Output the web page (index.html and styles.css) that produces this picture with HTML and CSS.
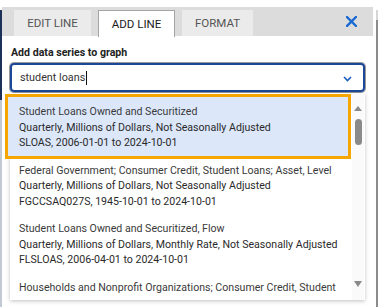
FILE: index.html
```html
<!DOCTYPE html>
<html lang="en">
<head>
  <meta charset="UTF-8" />
  <title>Edit Graph - Add Line</title>
  <link rel="stylesheet" href="styles.css">
</head>
<body>

<div class="page">
  <div class="edge-left"></div>

  <div class="panel">
    <div class="tabs">
      <div class="tab">Edit Line</div>
      <div class="tab active">Add Line</div>
      <div class="tab">Format</div>
      <button class="close" aria-label="Close">
        <svg width="11" height="11" viewBox="0 0 11 11"><path d="M1 1 L10 10 M10 1 L1 10" stroke="#1a6ad2" stroke-width="2.4" stroke-linecap="square" fill="none"/></svg>
      </button>
    </div>

    <div class="content">
      <div class="label">Add data series to graph</div>

      <div class="search">
        <span class="query">student loans</span><span class="caret"></span>
        <svg class="chevron" width="9" height="6" viewBox="0 0 9 6"><path d="M1 1 L4.5 4.5 L8 1" stroke="#1a5fc0" stroke-width="1.6" fill="none"/></svg>
      </div>

      <div class="dropdown">
        <div class="list">
          <div class="item selected">
            <div class="title">Student Loans Owned and Securitized</div>
            <div>Quarterly, Millions of Dollars, Not Seasonally Adjusted</div>
            <div>SLOAS, 2006-01-01 to 2024-10-01</div>
          </div>
          <div class="item">
            <div class="title">Federal Government; Consumer Credit, Student Loans; Asset, Level</div>
            <div>Quarterly, Millions of Dollars, Not Seasonally Adjusted</div>
            <div>FGCCSAQ027S, 1945-10-01 to 2024-10-01</div>
          </div>
          <div class="item">
            <div class="title">Student Loans Owned and Securitized, Flow</div>
            <div>Quarterly, Millions of Dollars, Monthly Rate, Not Seasonally Adjusted</div>
            <div>FLSLOAS, 2006-04-01 to 2024-10-01</div>
          </div>
          <div class="item">
            <div class="title">Households and Nonprofit Organizations; Consumer Credit, Student</div>
          </div>
        </div>

        <div class="scrollbar">
          <span class="arrow up"></span>
          <span class="thumb"></span>
          <span class="arrow down"></span>
        </div>
      </div>
    </div>
  </div>

  <div class="edge-right"></div>
</div>

</body>
</html>
```

FILE: styles.css
```css
body {
  margin: 0;
  background: #fff;
  font-family: Roboto, "Liberation Sans", sans-serif;
  color: #222;
}

.page {
  display: flex;
  height: 307px;
  overflow: hidden;
}

.edge-left {
  width: 2px;
  margin-top: 10px;
  background: linear-gradient(#1d3158 0, #1d3158 90px, #c3c9d3 90px);
}

.panel {
  width: 371px;
  margin-top: 7px;
}

.edge-right {
  width: 2px;
  margin-left: 3px;
  margin-top: 10px;
  background: linear-gradient(#d6d6d6 0, #d6d6d6 10px, #8c8c8c 10px);
}

/* tab strip */
.tabs {
  display: flex;
  align-items: flex-end;
  gap: 7px;
  height: 29px;
  padding-left: 12px;
  background: #dcdcdc;
}

.tab {
  width: 77px;
  height: 26px;
  line-height: 26px;
  text-align: center;
  font-size: 11.5px;
  text-transform: uppercase;
  color: #555;
  background: #ebebeb;
}

.tab:nth-child(3) {
  width: 71px;
}

.tab.active {
  height: 27px;
  line-height: 27px;
  margin-bottom: -1px;
  box-sizing: border-box;
  background: #fff;
  color: #1a1a1a;
  border: 1px solid #a4a4a4;
  border-bottom: none;
}

.close {
  margin-left: auto;
  margin-right: 16px;
  align-self: center;
  border: none;
  background: none;
  padding: 0;
  width: 11px;
  height: 11px;
  display: flex;
}

/* search */
.content {
  padding: 9px 8px 0 8px;
}

.label {
  font-size: 10.6px;
  font-weight: 700;
  line-height: 16px;
  padding-left: 1px;
  margin-bottom: 2px;
}

.search {
  display: flex;
  align-items: center;
  height: 29px;
  box-sizing: border-box;
  padding: 0 8px;
  border: 2px solid #1a4799;
  border-radius: 4px;
  box-shadow: 0 0 0 1px #9a9a9a;
  font-size: 10.8px;
  color: #333;
}

.caret {
  width: 1px;
  height: 14px;
  margin-left: 1px;
  background: #111;
}

.chevron {
  margin-left: auto;
  margin-right: 3px;
  margin-top: 3px;
}

/* results */
.dropdown {
  position: relative;
  height: 207px;
  margin-top: 1px;
  background: #fff;
  box-shadow: 0 1px 4px rgba(0, 0, 0, 0.25);
}

.list {
  height: 100%;
  overflow: hidden;
  margin-left: -5px;
  padding: 4px 17px 0 5px;
  box-sizing: border-box;
}

.item {
  padding: 7px 9px 5px 9px;
  font-size: 10.6px;
  line-height: 15.5px;
  color: #2a2a2a;
  white-space: nowrap;
}

.item .title {
  color: #3a3a3a;
}

.item.selected {
  margin-left: -2px;
  padding-left: 11px;
  background: #dce7fa;
  outline: 3px solid #f5a600;
}

.scrollbar {
  position: absolute;
  top: 0;
  right: 1px;
  bottom: 0;
  width: 12px;
  background: #fafafa;
  display: flex;
  flex-direction: column;
  align-items: center;
}

.arrow {
  width: 0;
  height: 0;
  border-left: 4px solid transparent;
  border-right: 4px solid transparent;
}

.arrow.up {
  margin-top: 13px;
  border-bottom: 5px solid #8a8a8a;
}

.arrow.down {
  margin-top: auto;
  margin-bottom: 13px;
  border-top: 6px solid #8a8a8a;
}

.thumb {
  width: 7px;
  height: 26px;
  margin-top: 8px;
  border-radius: 4px;
  background: #8a8a8a;
}
```
